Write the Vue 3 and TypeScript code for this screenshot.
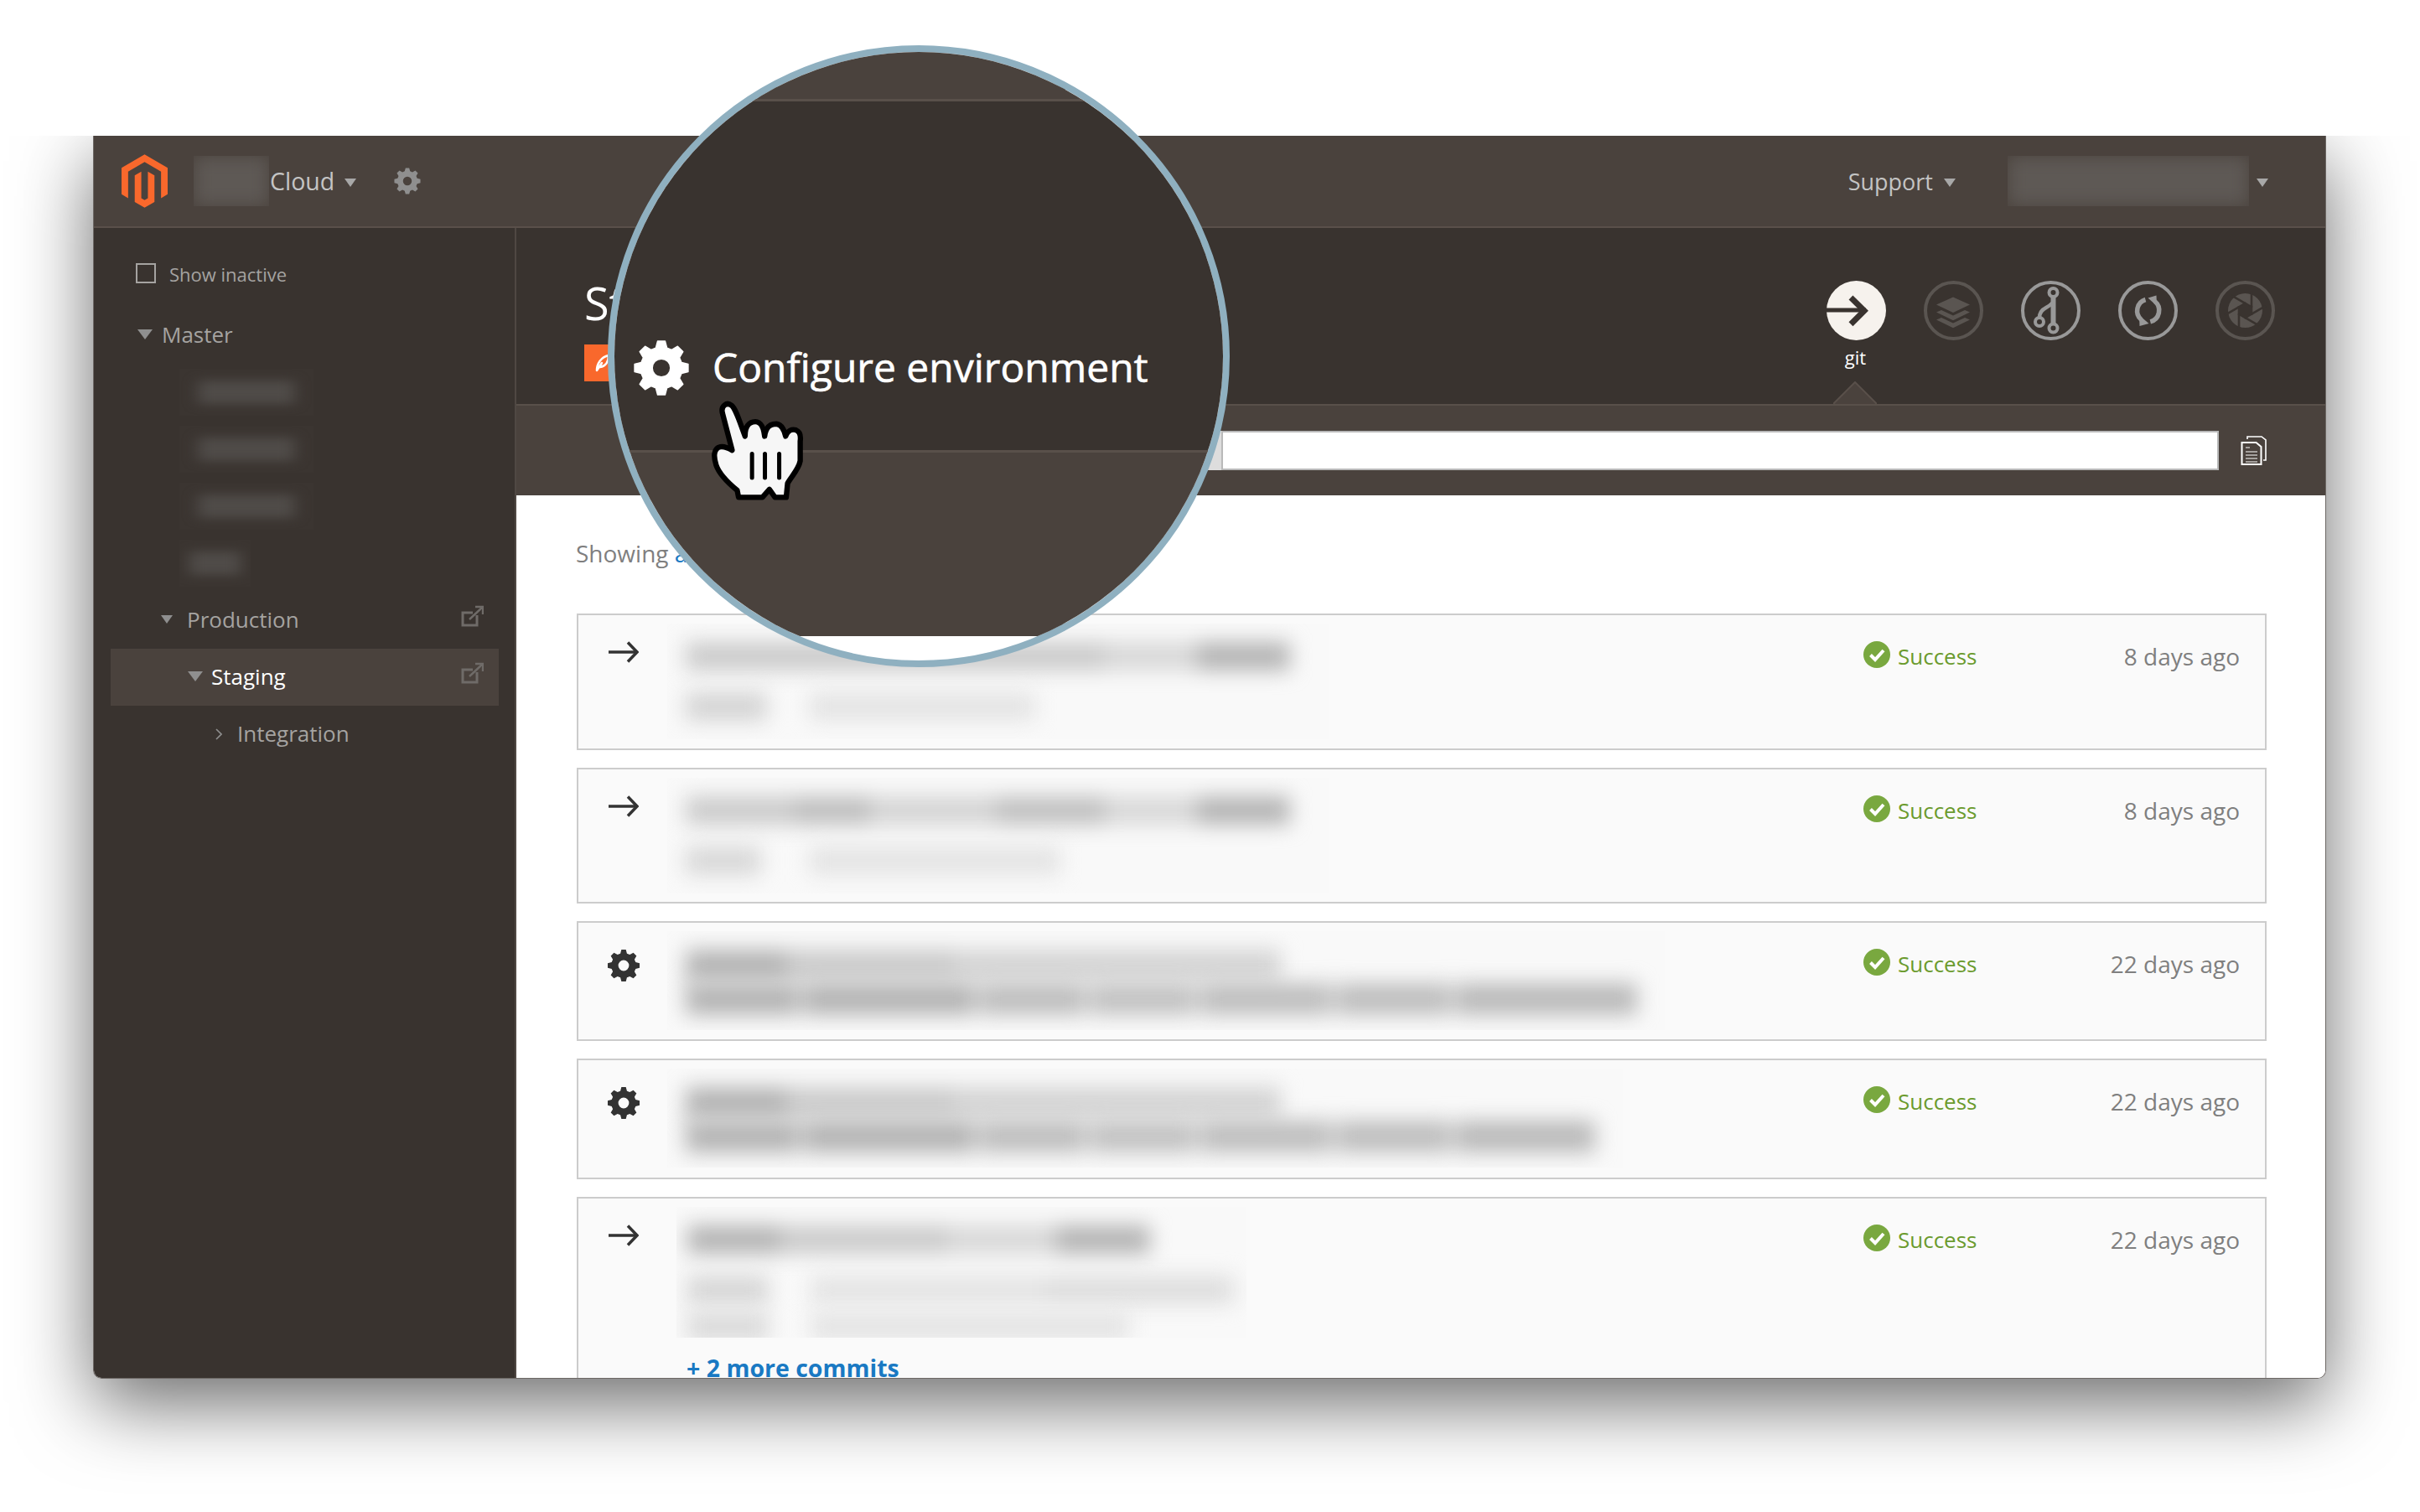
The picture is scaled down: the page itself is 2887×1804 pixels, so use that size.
<script setup lang="ts">
type TreeRow = {
  label?: string
  pad: number
  gap?: number
  mark?: "big" | "small" | "chevron"
  smudge?: number
  active?: boolean
  external?: boolean
}

type Bar = { gap: number; width: number; shade: string }

type Activity = {
  kind: "push" | "config"
  height: number
  patch: number
  left: number
  rowGap: number
  rows: Bar[][]
  age: string
  more?: string
}

// 8-tooth cog centred on 0,0, drawn in a -50..50 box
function makeCog(): string {
  const root = 37
  const tip = 48
  const pts: string[] = []
  for (let i = 0; i < 8; i++) {
    const a = (i * Math.PI) / 4 - Math.PI / 2
    const steps: [number, number][] = [
      [root, a - 0.27],
      [tip, a - 0.14],
      [tip, a + 0.14],
      [root, a + 0.27],
    ]
    for (const [r, t] of steps) {
      pts.push(`${(r * Math.cos(t)).toFixed(2)} ${(r * Math.sin(t)).toFixed(2)}`)
    }
  }
  return `M${pts.join("L")}Z M16 0A16 16 0 1 0 -16 0A16 16 0 1 0 16 0Z`
}

const cog = makeCog()

const tree: TreeRow[] = [
  { label: "Master", pad: 32, gap: 11, mark: "big" },
  { smudge: 160, pad: 82 },
  { smudge: 160, pad: 82 },
  { smudge: 160, pad: 82 },
  { smudge: 85, pad: 82 },
  { label: "Production", pad: 60, gap: 17, mark: "small", external: true },
  { label: "Staging", pad: 92, gap: 10, mark: "big", active: true, external: true },
  { label: "Integration", pad: 125, gap: 18, mark: "chevron" },
]

const dark = "#b4b4b4"
const mid = "#cbcbcb"
const pale = "#e4e4e4"

const activities: Activity[] = [
  {
    kind: "push",
    height: 163,
    patch: 790,
    left: 22,
    rowGap: 26,
    age: "8 days ago",
    rows: [
      [
        { gap: 0, width: 130, shade: mid },
        { gap: 0, width: 90, shade: mid },
        { gap: 0, width: 150, shade: mid },
        { gap: 0, width: 130, shade: mid },
        { gap: 0, width: 110, shade: "#d8d8d8" },
        { gap: 0, width: 111, shade: dark },
      ],
      [
        { gap: 0, width: 97, shade: "#d4d4d4" },
        { gap: 50, width: 270, shade: pale },
      ],
    ],
  },
  {
    kind: "push",
    height: 162,
    patch: 790,
    left: 22,
    rowGap: 26,
    age: "8 days ago",
    rows: [
      [
        { gap: 0, width: 130, shade: mid },
        { gap: 0, width: 90, shade: "#bebebe" },
        { gap: 0, width: 150, shade: "#d4d4d4" },
        { gap: 0, width: 130, shade: "#c0c0c0" },
        { gap: 0, width: 110, shade: "#d8d8d8" },
        { gap: 0, width: 111, shade: dark },
      ],
      [
        { gap: 0, width: 90, shade: "#d8d8d8" },
        { gap: 57, width: 300, shade: pale },
      ],
    ],
  },
  {
    kind: "config",
    height: 143,
    patch: 1190,
    left: 22,
    rowGap: 2,
    age: "22 days ago",
    rows: [
      [
        { gap: 0, width: 120, shade: dark },
        { gap: 0, width: 200, shade: mid },
        { gap: 0, width: 390, shade: "#d4d4d4" },
      ],
      [
        { gap: 0, width: 135, shade: dark },
        { gap: 5, width: 205, shade: dark },
        { gap: 5, width: 127, shade: "#bebebe" },
        { gap: 5, width: 127, shade: "#c2c2c2" },
        { gap: 5, width: 157, shade: "#bebebe" },
        { gap: 5, width: 137, shade: "#bebebe" },
        { gap: 5, width: 217, shade: "#bababa" },
      ],
    ],
  },
  {
    kind: "config",
    height: 144,
    patch: 1140,
    left: 22,
    rowGap: 2,
    age: "22 days ago",
    rows: [
      [
        { gap: 0, width: 120, shade: dark },
        { gap: 0, width: 200, shade: mid },
        { gap: 0, width: 390, shade: "#d4d4d4" },
      ],
      [
        { gap: 0, width: 135, shade: dark },
        { gap: 5, width: 205, shade: dark },
        { gap: 5, width: 127, shade: "#bebebe" },
        { gap: 5, width: 127, shade: "#c2c2c2" },
        { gap: 5, width: 157, shade: "#bebebe" },
        { gap: 5, width: 137, shade: "#bebebe" },
        { gap: 5, width: 167, shade: "#bababa" },
      ],
    ],
  },
  {
    kind: "push",
    height: 260,
    patch: 680,
    left: 13,
    rowGap: 18,
    age: "22 days ago",
    more: "+ 2 more commits",
    rows: [
      [
        { gap: 0, width: 110, shade: dark },
        { gap: 0, width: 200, shade: mid },
        { gap: 0, width: 130, shade: "#d8d8d8" },
        { gap: 0, width: 112, shade: dark },
      ],
      [
        { gap: 0, width: 97, shade: "#d6d6d6" },
        { gap: 50, width: 280, shade: pale },
        { gap: 0, width: 225, shade: "#dedede" },
      ],
      [
        { gap: 0, width: 97, shade: "#dadada" },
        { gap: 50, width: 380, shade: pale },
      ],
    ],
  },
]
</script>

<template>
  <div class="stage">
    <div class="window">
      <header class="topbar">
        <svg class="logo" viewBox="1.6 0 20.8 24">
          <path d="M12 24l-4.455-2.572v-12l2.97-1.715v12.001l1.485.902 1.485-.902V7.713l2.971 1.715v12zM22.391 6v12l-2.969 1.714V7.713L12 3.43 4.574 7.713v12L1.609 18V6L12 0z" fill="#f9682c" />
        </svg>
        <div class="smudge org"><i></i></div>
        <span class="nav-text">Cloud</span>
        <span class="caret cloud-caret"></span>
        <svg class="top-cog" viewBox="-52 -52 104 104">
          <path :d="cog" fill="#8f8f8f" fill-rule="evenodd" />
        </svg>
        <div class="top-right">
          <span class="nav-text support">Support</span>
          <span class="caret nav-caret"></span>
          <div class="smudge account"><i></i></div>
          <span class="caret account-caret"></span>
        </div>
      </header>

      <div class="body">
        <aside class="sidebar">
          <label class="inactive">
            <span class="box"></span>
            <span>Show inactive</span>
          </label>
          <div
            v-for="(row, i) in tree"
            :key="i"
            class="tree-row"
            :class="{ active: row.active }"
            :style="{ paddingLeft: row.pad + 'px' }"
          >
            <div v-if="row.smudge" class="smudge tree-smudge" :style="{ width: row.smudge + 'px' }"><i></i></div>
            <template v-else>
              <span v-if="row.mark === 'big'" class="caret big" :style="{ marginRight: row.gap + 'px' }"></span>
              <span v-else-if="row.mark === 'small'" class="caret small" :style="{ marginRight: row.gap + 'px' }"></span>
              <svg v-else class="chevron" viewBox="0 0 8 14" :style="{ marginRight: row.gap + 'px' }">
                <path d="M1 1l6 6-6 6" fill="none" stroke="#8f8f8f" stroke-width="1.6" />
              </svg>
              <span class="tree-label">{{ row.label }}</span>
              <svg v-if="row.external" class="external" viewBox="0 0 27 27">
                <path d="M19 12v12H2V9h12" fill="none" stroke="#6f6b68" stroke-width="3" />
                <path d="M10 17L25 3M17 2h9v9" fill="none" stroke="#6f6b68" stroke-width="2.4" />
              </svg>
            </template>
          </div>
        </aside>

        <main class="main">
          <section class="env-head">
            <div class="env-title">
              <h1>Staging</h1>
              <span class="badge">
                <svg viewBox="0 0 20 24">
                  <path d="M3 21C3 13 8 5 17 3 17 11 13 16 7 17M3 21l6-9" fill="none" stroke="#fff" stroke-width="2.6" stroke-linecap="round" />
                </svg>
              </span>
            </div>
            <nav class="tabs">
              <div class="tab">
                <svg viewBox="0 0 71 71">
                  <circle cx="35.5" cy="35.5" r="35.5" fill="#f6f2ed" />
                  <path d="M0 35h47" stroke="#39332f" stroke-width="5" />
                  <path d="M29 20l16 15.7-16 16" fill="none" stroke="#39332f" stroke-width="7" />
                </svg>
                <span>git</span>
              </div>
              <div class="tab">
                <svg viewBox="0 0 71 71">
                  <circle cx="35.5" cy="35.5" r="33.5" fill="none" stroke="#5a5551" stroke-width="4" />
                  <path d="M35 19.5l20 9-20 9.500-20-9.500z" fill="#5a5551" />
                  <path d="M15 37.500l6-2.500 14 6.500 14-6.500 6 2.500-20 9.800z" fill="#5a5551" />
                  <path d="M15 46.500l6-2.500 14 6.500 14-6.500 6 2.500-20 9.800z" fill="#5a5551" />
                </svg>
              </div>
              <div class="tab">
                <svg viewBox="0 0 71 71">
                  <circle cx="35.5" cy="35.500" r="33.500" fill="none" stroke="#999" stroke-width="4" />
                  <circle cx="38.500" cy="14" r="5" fill="none" stroke="#999" stroke-width="4" />
                  <circle cx="38.500" cy="56.500" r="5" fill="none" stroke="#999" stroke-width="4" />
                  <circle cx="22" cy="49" r="5" fill="none" stroke="#999" stroke-width="4" />
                  <path d="M38.500 19v32" stroke="#999" stroke-width="6" />
                  <path d="M22 44c0-7 4-10 8-12s6-4 8-6" fill="none" stroke="#999" stroke-width="4.500" />
                </svg>
              </div>
              <div class="tab">
                <svg viewBox="0 0 71 71">
                  <circle cx="35.5" cy="35.500" r="33.500" fill="none" stroke="#999" stroke-width="4" />
                  <path d="M32.500 22.500A14 14 0 0 0 27.500 46.500" fill="none" stroke="#999" stroke-width="5.500" />
                  <path d="M25 41l11.500 10-11 3z" fill="#999" />
                  <path d="M38.300 48.800A14 14 0 0 0 43.700 24.500" fill="none" stroke="#999" stroke-width="5.500" />
                  <path d="M46 30L35.500 20.500l10-3z" fill="#999" />
                </svg>
              </div>
              <div class="tab">
                <svg viewBox="0 0 71 71">
                  <circle cx="35.5" cy="35.500" r="33.500" fill="none" stroke="#5a5551" stroke-width="4" />
                  <circle cx="35.500" cy="35.500" r="20.500" fill="#5a5551" />
                  <g stroke="#39332f" stroke-width="2.600">
                    <path d="M43 41V12" />
                    <path d="M43 41V12" transform="rotate(60 35.500 35.500)" />
                    <path d="M43 41V12" transform="rotate(120 35.500 35.500)" />
                    <path d="M43 41V12" transform="rotate(180 35.500 35.500)" />
                    <path d="M43 41V12" transform="rotate(240 35.500 35.500)" />
                    <path d="M43 41V12" transform="rotate(300 35.500 35.500)" />
                  </g>
                  <path d="M43 31.200v8.600l-7.500 4.300-7.500-4.300v-8.600l7.500-4.300z" fill="#39332f" />
                </svg>
              </div>
            </nav>
            <svg class="pointer" viewBox="0 0 52 28">
              <path d="M0 27L26 1l26 26" fill="#4a423d" stroke="#59504a" stroke-width="2" />
            </svg>
          </section>

          <section class="clone-bar">
            <div class="clone-type"></div>
            <div class="clone-url"></div>
            <svg class="copy" viewBox="0 0 31 35">
              <path d="M8 4V1h17l5 4v24h-3" fill="none" stroke="#fff" stroke-width="1.600" />
              <path d="M1.500 8h17l6 5v21h-23z" fill="#4a423d" stroke="#fff" stroke-width="2" />
              <path d="M6 14h5M6 19h14M6 23h14M6 27h14M6 31h14" stroke="#fff" stroke-width="1" />
            </svg>
          </section>

          <section class="feed">
            <p class="showing">Showing <a>all</a></p>
            <div class="cards">
              <article
                v-for="(item, i) in activities"
                :key="i"
                class="card"
                :style="{ height: item.height + 'px' }"
              >
                <div class="kind">
                  <svg v-if="item.kind === 'push'" class="arrow" viewBox="0 0 36 26">
                    <path d="M0 13h33" stroke="#333" stroke-width="3.500" />
                    <path d="M23 1.500L34 13 23 24.500" fill="none" stroke="#333" stroke-width="3.500" />
                  </svg>
                  <svg v-else class="kind-cog" viewBox="-50 -50 100 100">
                    <path :d="cog" fill="#333" fill-rule="evenodd" />
                  </svg>
                </div>
                <div class="detail">
                  <div
                    class="patch"
                    :style="{ width: item.patch + 'px', paddingLeft: item.left + 'px', gap: item.rowGap + 'px' }"
                  >
                    <div v-for="(row, r) in item.rows" :key="r" class="blur-row">
                      <span
                        v-for="(bar, b) in row"
                        :key="b"
                        class="bar"
                        :style="{ marginLeft: bar.gap + 'px', width: bar.width + 'px', background: bar.shade }"
                      ></span>
                    </div>
                  </div>
                  <a v-if="item.more" class="more">{{ item.more }}</a>
                </div>
                <div class="status">
                  <svg viewBox="0 0 32 32">
                    <circle cx="16" cy="16" r="16" fill="#79a83f" />
                    <path d="M8.500 16.500l5.500 5.500 10-11" fill="none" stroke="#fff" stroke-width="4" />
                  </svg>
                  <span>Success</span>
                </div>
                <div class="age">{{ item.age }}</div>
              </article>
            </div>
          </section>
        </main>
      </div>
    </div>

    <div class="lens">
      <div class="lens-top"></div>
      <div class="lens-mid">
        <svg class="lens-cog" viewBox="-52 -52 104 104">
          <path :d="cog" fill="#fff" fill-rule="evenodd" stroke="#fff" stroke-width="2" stroke-linejoin="round" />
        </svg>
        <span class="lens-text">Configure environment</span>
      </div>
      <div class="lens-low"></div>
      <svg class="hand" viewBox="350 340 350 380">
        <path
          d="M397 398C392 375 412 358 430 372C445 385 455 420 478 482C478 450 490 430 515 430C535 430 545 455 548 482C552 452 565 438 590 438C610 440 618 460 623 482C630 462 645 455 660 460C675 466 677 485 675 500L675 570C670 600 640 630 630 650L625 700H585L565 672L540 700H455L450 675C420 650 385 615 375 585C365 555 365 525 390 520C405 517 420 525 432 532Z"
          fill="#f6f6f6"
          stroke="#000"
          stroke-width="19"
          stroke-linejoin="round"
        />
        <path d="M503 545v85M549 545v85M600 545v85" stroke="#000" stroke-width="15" stroke-linecap="round" />
      </svg>
    </div>
  </div>
</template>

<style scoped>
.stage {
  position: relative;
  width: 2887px;
  height: 1804px;
  overflow: hidden;
  background: #fff;
  font-family: "Open Sans", "Liberation Sans", sans-serif;
}

.window {
  box-sizing: border-box;
  width: 2664px;
  height: 1483px;
  margin-left: 111px;
  position: absolute;
  top: 162px;
  display: flex;
  flex-direction: column;
  overflow: hidden;
  background: #fff;
  border: 1px solid #6d6865;
  border-top: 0;
  border-radius: 0 0 10px 10px;
}

.stage::before {
  content: "";
  position: absolute;
  left: 111px;
  top: 162px;
  width: 2664px;
  height: 1483px;
  border-radius: 0 0 10px 10px;
  box-shadow: 0 30px 90px rgba(0, 0, 0, 0.58);
  clip-path: inset(0 -140px -180px -140px);
}

.topbar {
  box-sizing: border-box;
  flex: none;
  height: 110px;
  display: flex;
  align-items: center;
  padding: 0 68px 0 33px;
  background: #4a423d;
  border-bottom: 2px solid #5a504a;
}

.logo {
  width: 55px;
  height: 64px;
  margin-right: 31px;
}

.smudge {
  overflow: hidden;
  flex: none;
  display: block;
}

.smudge i {
  display: block;
  height: 100%;
  background: #5e5955;
  filter: blur(10px);
}

.org {
  width: 90px;
  height: 60px;
  margin-right: 1px;
}

.nav-text {
  font-size: 28.5px;
  color: #c4c4c4;
}

.nav-text.support {
  font-size: 27px;
}

.caret {
  flex: none;
  width: 0;
  height: 0;
  border-style: solid;
  border-color: #a8a8a8 transparent transparent;
}

.nav-caret {
  border-width: 10px 7px 0;
  margin: 4px 0 0 13px;
}

.cloud-caret {
  border-width: 10px 7px 0;
  margin: 4px 0 0 12px;
}

.top-cog {
  width: 34px;
  height: 34px;
  margin-left: 44px;
}

.top-right {
  margin-left: auto;
  display: flex;
  align-items: center;
}

.account {
  width: 288px;
  height: 60px;
  margin-left: 62px;
}

.account-caret {
  border-width: 10px 7px 0;
  margin: 4px 0 0 9px;
}

.body {
  flex: 1;
  display: flex;
  min-height: 0;
}

.sidebar {
  box-sizing: border-box;
  flex: none;
  width: 504px;
  padding: 41px 19px 0 20px;
  background: #39332f;
  border-right: 2px solid #4f4843;
}

.inactive {
  display: flex;
  align-items: center;
  height: 28px;
  margin: 0 0 25px 30px;
  font-size: 22px;
  color: #a5a3a1;
}

.box {
  box-sizing: border-box;
  width: 24px;
  height: 24px;
  margin: -2px 16px 0 0;
  border: 2px solid #a5a3a1;
}

.tree-row {
  height: 68px;
  display: flex;
  align-items: center;
  position: relative;
  font-size: 26px;
  color: #a5a3a1;
}

.tree-label {
  margin-top: -3px;
}

.tree-row.active {
  background: #4a423d;
  color: #fff;
}

.tree-smudge {
  height: 56px;
  background: #3b3531;
}

.tree-smudge i {
  background: #4f4b48;
  filter: blur(12px);
  transform: scale(0.72, 0.5);
}

.caret.big {
  border-width: 12px 9px 0;
  border-top-color: #8f8f8f;
  margin-top: -2px;
}

.caret.small {
  border-width: 10px 7px 0;
  border-top-color: #8f8f8f;
  margin-top: -2px;
}

.chevron {
  width: 8px;
  height: 14px;
}

.external {
  position: absolute;
  right: 18px;
  top: 16px;
  width: 27px;
  height: 27px;
}

.main {
  flex: 1;
  min-width: 0;
  display: flex;
  flex-direction: column;
}

.env-head {
  position: relative;
  box-sizing: border-box;
  flex: none;
  height: 210px;
  display: flex;
  justify-content: space-between;
  padding: 0 60px 0 81px;
  background: #39332f;
}

.env-title {
  padding-top: 59px;
}

.env-title h1 {
  margin: 0;
  font-size: 54px;
  line-height: 60px;
  font-weight: 400;
  color: #fff;
}

.badge {
  display: flex;
  align-items: center;
  width: 90px;
  height: 44px;
  margin-top: 20px;
  padding-left: 12px;
  box-sizing: border-box;
  background: #f9682c;
}

.badge svg {
  width: 20px;
  height: 24px;
}

.tabs {
  display: flex;
  gap: 45px;
  padding-top: 63px;
}

.tab {
  width: 71px;
  display: flex;
  flex-direction: column;
  align-items: center;
  font-size: 22px;
  color: #fff;
}

.tab svg {
  flex: none;
  width: 71px;
  height: 71px;
  margin-bottom: 5px;
}

.tab span {
  margin-right: 2px;
}

.pointer {
  position: absolute;
  left: 1571px;
  bottom: -1px;
  width: 52px;
  height: 28px;
}

.clone-bar {
  box-sizing: border-box;
  flex: none;
  height: 109px;
  display: flex;
  align-items: center;
  padding: 0 70px 0 500px;
  background: #4a423d;
  border-top: 2px solid #59504a;
}

.clone-type {
  width: 341px;
  height: 47px;
  background: #ddd;
}

.clone-url {
  box-sizing: border-box;
  flex: 1;
  height: 47px;
  background: #fff;
  border: 2px solid #b9b9b9;
}

.copy {
  width: 31px;
  height: 35px;
  margin-left: 26px;
}

.feed {
  flex: 1;
  min-height: 0;
  padding: 49px 70px 0 71px;
  background: #fff;
}

.showing {
  margin: 0 0 52px;
  font-size: 28px;
  line-height: 40px;
  color: #7f7f7f;
}

.showing a {
  color: #1979c3;
}

.cards {
  display: flex;
  flex-direction: column;
  gap: 21px;
  margin-left: 1px;
}

.card {
  box-sizing: border-box;
  flex: none;
  display: flex;
  background: #fafafa;
  border: 2px solid #ccc;
}

.kind {
  flex: none;
  width: 106px;
  padding: 31px 0 0 34px;
  box-sizing: border-box;
}

.arrow {
  display: block;
  width: 36px;
  height: 26px;
  margin-left: 2px;
}

.kind-cog {
  display: block;
  width: 40px;
  height: 40px;
}

.detail {
  flex: 1;
  min-width: 0;
  padding-top: 10px;
}

.patch {
  box-sizing: border-box;
  display: flex;
  flex-direction: column;
  height: 138px;
  padding-top: 22px;
  overflow: hidden;
  background: #f9f9f9;
}

.card:nth-child(n + 3) .patch {
  height: 118px;
}

.card:nth-child(3) .blur-row,
.card:nth-child(4) .blur-row {
  height: 38px;
}

.card:nth-child(5) .patch {
  height: 156px;
  margin-left: 11px;
}

.card:nth-child(5) .blur-row:nth-child(2) {
  margin-top: 8px;
}

.card:nth-child(5) .blur-row:nth-child(3) {
  margin-top: -8px;
}

.blur-row {
  flex: none;
  height: 34px;
  display: flex;
  filter: blur(12px);
}

.bar {
  flex: none;
  height: 100%;
}

.more {
  display: block;
  margin: 18px 0 0 23px;
  font-size: 28.5px;
  line-height: 36px;
  font-weight: 700;
  color: #1979c3;
}

.status {
  flex: none;
  width: 270px;
  display: flex;
  align-items: flex-start;
  padding-top: 31px;
  box-sizing: border-box;
  font-size: 26px;
  line-height: 36px;
  color: #6b9b2e;
}

.status svg {
  flex: none;
  width: 32px;
  height: 32px;
  margin-right: 9px;
}

.age {
  flex: none;
  width: 209px;
  box-sizing: border-box;
  padding: 31px 30px 0 0;
  text-align: right;
  font-size: 28px;
  line-height: 36px;
  white-space: nowrap;
  color: #7f7f7f;
}

.lens {
  position: absolute;
  left: 725px;
  top: 54px;
  box-sizing: border-box;
  width: 742px;
  height: 742px;
  display: flex;
  flex-direction: column;
  overflow: hidden;
  border: 8px solid #8fb0c0;
  border-radius: 50%;
  background: #fff;
}

.lens-top {
  flex: none;
  height: 59px;
  background: #4a423d;
  border-bottom: 3px solid #59504a;
  box-sizing: border-box;
}

.lens-mid {
  box-sizing: border-box;
  flex: none;
  height: 416px;
  display: flex;
  align-items: flex-start;
  padding: 283px 0 0 21px;
  background: #39332f;
}

.lens-cog {
  flex: none;
  width: 70px;
  height: 70px;
  margin-right: 26px;
}

.lens-text {
  font-size: 48px;
  line-height: 68px;
  color: #fff;
  -webkit-text-stroke: 0.6px #fff;
}

.lens-low {
  flex: none;
  height: 222px;
  box-sizing: border-box;
  background: #4a423d;
  border-top: 3px solid #59504a;
}

.hand {
  position: absolute;
  left: 113px;
  top: 411px;
  width: 117px;
  height: 127px;
}
</style>

<style>
html,
body {
  margin: 0;
  background: #fff;
}
</style>
